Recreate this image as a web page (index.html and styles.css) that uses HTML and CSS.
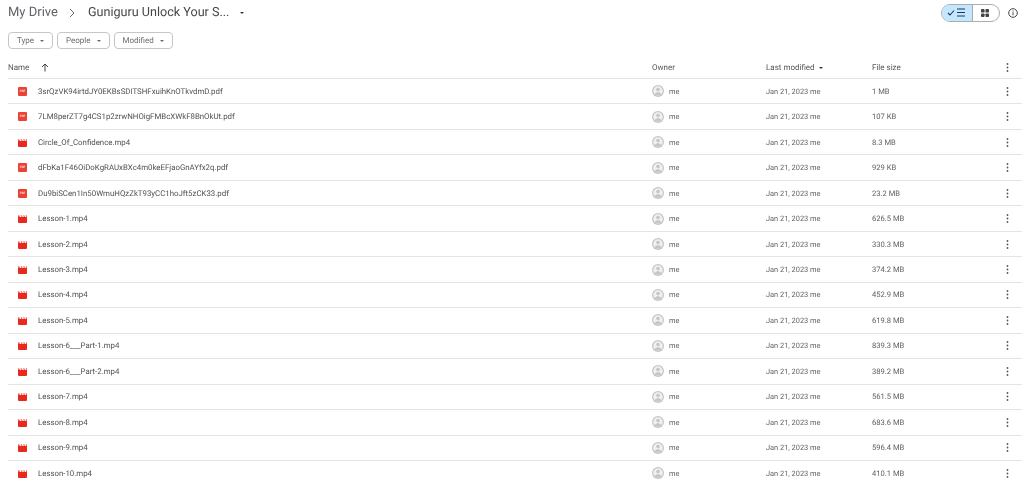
FILE: index.html
```html
<!DOCTYPE html>
<html>
<head>
  <title>Guniguru Unlock Your S... - My Drive</title>
  <meta name="viewport" content="width=device-width, initial-scale=1.0">
  <link rel="stylesheet" href="styles.css">
</head>
<body>
  <svg class="defs" width="0" height="0">
    <symbol id="vid" viewBox="0 0 9 9">
      <path d="M0 3h9v5a1 1 0 0 1-1 1H1a1 1 0 0 1-1-1z" fill="#e8291d"/>
      <path d="M0 1.400h1.200l.9 1.300H0zM2.500 1.400h1.300l.9 1.300H3.400zM5 1.400h1.300l.9 1.300H5.900zM7.500 1.400H9v1.300H8.400z" fill="#e8291d"/>
    </symbol>
    <symbol id="user" viewBox="0 0 12 12">
      <circle cx="6" cy="6" r="6" fill="#c6c6c6"/>
      <circle cx="6" cy="6" r="4.700" fill="#f1f1f1"/>
      <circle cx="6" cy="4.600" r="1.800" fill="#c6c6c6"/>
      <path d="M2.600 9.200c.6-1.400 2.100-2 3.400-2s2.800.6 3.400 2C8.500 10.100 7.300 10.600 6 10.600S3.500 10.100 2.600 9.200z" fill="#c6c6c6"/>
    </symbol>
    <symbol id="more" viewBox="0 0 3 9">
      <circle cx="1.500" cy="1" r=".9" fill="#555"/>
      <circle cx="1.500" cy="4.500" r=".9" fill="#555"/>
      <circle cx="1.500" cy="8" r=".9" fill="#555"/>
    </symbol>
  </svg>

  <div class="top">
    <div class="crumbs">
      <span>My Drive</span>
      <svg class="crumb-sep" width="8" height="10" viewBox="0 0 8 10"><path d="M2 1l4 4-4 4" fill="none" stroke="#666" stroke-width="1"/></svg>
      <span class="crumb-name">Guniguru Unlock Your S...</span>
      <span class="caret caret-big"></span>
    </div>
    <div class="tools">
      <div class="toggle">
        <div class="toggle-on">
          <svg width="20" height="9" viewBox="0 0 20 9"><path d="M1 5l2 2 4-4.500" fill="none" stroke="#1c3a52" stroke-width="1.100"/><path d="M10 1h8M10 4.500h8M10 8h8" fill="none" stroke="#1c3a52" stroke-width="1.200"/></svg>
        </div>
        <div class="toggle-off">
          <svg width="8" height="8" viewBox="0 0 9 9" fill="#444"><rect width="4" height="4" rx="1"/><rect x="5" width="4" height="4" rx="1"/><rect y="5" width="4" height="4" rx="1"/><rect x="5" y="5" width="4" height="4" rx="1"/></svg>
        </div>
      </div>
      <svg width="10" height="10" viewBox="0 0 10 10"><circle cx="5" cy="5" r="4.300" fill="none" stroke="#444" stroke-width="1"/><path d="M5 4.300v3M5 2.500v1" stroke="#444" stroke-width="1"/></svg>
    </div>
  </div>

  <div class="filters">
    <div class="chip">Type <span class="caret"></span></div>
    <div class="chip">People <span class="caret"></span></div>
    <div class="chip">Modified <span class="caret"></span></div>
  </div>

  <div class="row head">
    <div class="name-head">Name
      <svg width="8" height="9" viewBox="0 0 8 9"><path d="M4 8.500V1.500M1 4l3-3 3 3" fill="none" stroke="#444" stroke-width="1"/></svg>
    </div>
    <div>Owner</div>
    <div>Last modified <span class="caret caret-dark"></span></div>
    <div>File size</div>
    <svg class="more" width="3" height="9"><use href="#more"/></svg>
  </div>

  <div class="row"><div class="name"><div class="ficon pdf">PDF</div>3srQzVK94irtdJY0EKBsSDITSHFxuihKnOTkvdmD.pdf</div><div class="owner"><svg width="12" height="12"><use href="#user"/></svg>me</div><div class="meta">Jan 21, 2023 <span class="by">me</span></div><div class="size">1 MB</div><svg class="more" width="3" height="9"><use href="#more"/></svg></div>
  <div class="row"><div class="name"><div class="ficon pdf">PDF</div>7LM8perZT7g4CS1p2zrwNHOigFMBcXWkF8BnOkUt.pdf</div><div class="owner"><svg width="12" height="12"><use href="#user"/></svg>me</div><div class="meta">Jan 21, 2023 <span class="by">me</span></div><div class="size">107 KB</div><svg class="more" width="3" height="9"><use href="#more"/></svg></div>
  <div class="row"><div class="name"><svg class="ficon" width="9" height="9"><use href="#vid"/></svg>Circle_Of_Confidence.mp4</div><div class="owner"><svg width="12" height="12"><use href="#user"/></svg>me</div><div class="meta">Jan 21, 2023 <span class="by">me</span></div><div class="size">8.3 MB</div><svg class="more" width="3" height="9"><use href="#more"/></svg></div>
  <div class="row"><div class="name"><div class="ficon pdf">PDF</div>dFbKa1F46OiDoKgRAUxBXc4m0keEFjaoGnAYfx2q.pdf</div><div class="owner"><svg width="12" height="12"><use href="#user"/></svg>me</div><div class="meta">Jan 21, 2023 <span class="by">me</span></div><div class="size">929 KB</div><svg class="more" width="3" height="9"><use href="#more"/></svg></div>
  <div class="row"><div class="name"><div class="ficon pdf">PDF</div>Du9biSCen1In50WmuHQzZkT93yCC1hoJft5zCK33.pdf</div><div class="owner"><svg width="12" height="12"><use href="#user"/></svg>me</div><div class="meta">Jan 21, 2023 <span class="by">me</span></div><div class="size">23.2 MB</div><svg class="more" width="3" height="9"><use href="#more"/></svg></div>
  <div class="row"><div class="name"><svg class="ficon" width="9" height="9"><use href="#vid"/></svg>Lesson-1.mp4</div><div class="owner"><svg width="12" height="12"><use href="#user"/></svg>me</div><div class="meta">Jan 21, 2023 <span class="by">me</span></div><div class="size">626.5 MB</div><svg class="more" width="3" height="9"><use href="#more"/></svg></div>
  <div class="row"><div class="name"><svg class="ficon" width="9" height="9"><use href="#vid"/></svg>Lesson-2.mp4</div><div class="owner"><svg width="12" height="12"><use href="#user"/></svg>me</div><div class="meta">Jan 21, 2023 <span class="by">me</span></div><div class="size">330.3 MB</div><svg class="more" width="3" height="9"><use href="#more"/></svg></div>
  <div class="row"><div class="name"><svg class="ficon" width="9" height="9"><use href="#vid"/></svg>Lesson-3.mp4</div><div class="owner"><svg width="12" height="12"><use href="#user"/></svg>me</div><div class="meta">Jan 21, 2023 <span class="by">me</span></div><div class="size">374.2 MB</div><svg class="more" width="3" height="9"><use href="#more"/></svg></div>
  <div class="row"><div class="name"><svg class="ficon" width="9" height="9"><use href="#vid"/></svg>Lesson-4.mp4</div><div class="owner"><svg width="12" height="12"><use href="#user"/></svg>me</div><div class="meta">Jan 21, 2023 <span class="by">me</span></div><div class="size">452.9 MB</div><svg class="more" width="3" height="9"><use href="#more"/></svg></div>
  <div class="row"><div class="name"><svg class="ficon" width="9" height="9"><use href="#vid"/></svg>Lesson-5.mp4</div><div class="owner"><svg width="12" height="12"><use href="#user"/></svg>me</div><div class="meta">Jan 21, 2023 <span class="by">me</span></div><div class="size">619.8 MB</div><svg class="more" width="3" height="9"><use href="#more"/></svg></div>
  <div class="row"><div class="name"><svg class="ficon" width="9" height="9"><use href="#vid"/></svg>Lesson-6___Part-1.mp4</div><div class="owner"><svg width="12" height="12"><use href="#user"/></svg>me</div><div class="meta">Jan 21, 2023 <span class="by">me</span></div><div class="size">839.3 MB</div><svg class="more" width="3" height="9"><use href="#more"/></svg></div>
  <div class="row"><div class="name"><svg class="ficon" width="9" height="9"><use href="#vid"/></svg>Lesson-6___Part-2.mp4</div><div class="owner"><svg width="12" height="12"><use href="#user"/></svg>me</div><div class="meta">Jan 21, 2023 <span class="by">me</span></div><div class="size">389.2 MB</div><svg class="more" width="3" height="9"><use href="#more"/></svg></div>
  <div class="row"><div class="name"><svg class="ficon" width="9" height="9"><use href="#vid"/></svg>Lesson-7.mp4</div><div class="owner"><svg width="12" height="12"><use href="#user"/></svg>me</div><div class="meta">Jan 21, 2023 <span class="by">me</span></div><div class="size">561.5 MB</div><svg class="more" width="3" height="9"><use href="#more"/></svg></div>
  <div class="row"><div class="name"><svg class="ficon" width="9" height="9"><use href="#vid"/></svg>Lesson-8.mp4</div><div class="owner"><svg width="12" height="12"><use href="#user"/></svg>me</div><div class="meta">Jan 21, 2023 <span class="by">me</span></div><div class="size">683.6 MB</div><svg class="more" width="3" height="9"><use href="#more"/></svg></div>
  <div class="row"><div class="name"><svg class="ficon" width="9" height="9"><use href="#vid"/></svg>Lesson-9.mp4</div><div class="owner"><svg width="12" height="12"><use href="#user"/></svg>me</div><div class="meta">Jan 21, 2023 <span class="by">me</span></div><div class="size">596.4 MB</div><svg class="more" width="3" height="9"><use href="#more"/></svg></div>
  <div class="row"><div class="name"><svg class="ficon" width="9" height="9"><use href="#vid"/></svg>Lesson-10.mp4</div><div class="owner"><svg width="12" height="12"><use href="#user"/></svg>me</div><div class="meta">Jan 21, 2023 <span class="by">me</span></div><div class="size">410.1 MB</div><svg class="more" width="3" height="9"><use href="#more"/></svg></div>
</body>
</html>
```

FILE: styles.css
```css
html, body {
  height: 480px;
  overflow: hidden;
}
body {
  margin: 0;
  background-color: white;
  font-family: Roboto, "Liberation Sans", sans-serif;
  font-size: 8px;
  color: #5f6368;
  text-rendering: geometricPrecision;
  filter: blur(0.45px);
}
.defs {
  position: absolute;
}
.top {
  display: flex;
  justify-content: space-between;
  align-items: center;
  height: 25px;
  padding: 0 6px 0 8px;
}
.crumbs {
  display: flex;
  align-items: center;
  font-size: 13px;
  color: #5f6368;
}
.crumb-sep {
  margin: 0 12px 0 10px;
}
.crumb-name {
  font-size: 12.6px;
  color: #444746;
}
.caret {
  display: inline-block;
  border: 2px solid transparent;
  border-top: 2.5px solid #666;
  border-bottom: 0;
  vertical-align: middle;
  margin-left: 6px;
}
.caret-big {
  border-width: 2.5px 2.5px 0;
  border-top-color: #333;
  margin-left: 11px;
}
.caret-dark {
  border-top-color: #333;
  margin-left: 2px;
}
.tools {
  display: flex;
  align-items: center;
  gap: 8px;
}
.toggle {
  display: flex;
  width: 57px;
  height: 16px;
  border: 1px solid #a9adb1;
  border-radius: 9px;
  overflow: hidden;
}
.toggle-on {
  display: flex;
  align-items: center;
  justify-content: center;
  width: 30px;
  background-color: #c2e7ff;
  border-right: 1px solid #a9adb1;
}
.toggle-off {
  display: flex;
  align-items: center;
  justify-content: center;
  flex: 1;
  padding-right: 2px;
}
.filters {
  display: flex;
  gap: 4px;
  padding: 7px 8px 0;
  height: 17px;
}
.chip {
  display: flex;
  align-items: center;
  height: 15px;
  padding: 0 8px 0 8px;
  border: 1px solid #c4c7c5;
  border-radius: 4px;
  color: #6a6e72;
}
.row {
  display: grid;
  grid-template-columns: 644px 114px 106px 1fr 3px;
  align-items: center;
  height: 25.47px;
  box-sizing: border-box;
  margin: 0 2px 0 8px;
  padding-right: 13.5px;
  border-bottom: 1px solid #e4e4e4;
}
.head {
  height: 24px;
  margin-top: 6px;
  padding-top: 2px;
  color: #555;
}
.name-head {
  display: flex;
  align-items: center;
  gap: 12px;
}
.name {
  display: flex;
  align-items: center;
  font-size: 7.85px;
  color: #4d5156;
}
.ficon {
  flex: none;
  margin: 0 11px 0 10px;
}
.pdf {
  width: 9px;
  height: 9px;
  border-radius: 1px;
  background-color: #ea4335;
  color: #fbd9d6;
  font-size: 3px;
  font-weight: 700;
  line-height: 9px;
  text-align: center;
}
.owner {
  display: flex;
  align-items: center;
  gap: 5px;
  font-size: 7.4px;
}
.meta {
  font-size: 7.4px;
}
.size {
  font-size: 7.6px;
}
```
